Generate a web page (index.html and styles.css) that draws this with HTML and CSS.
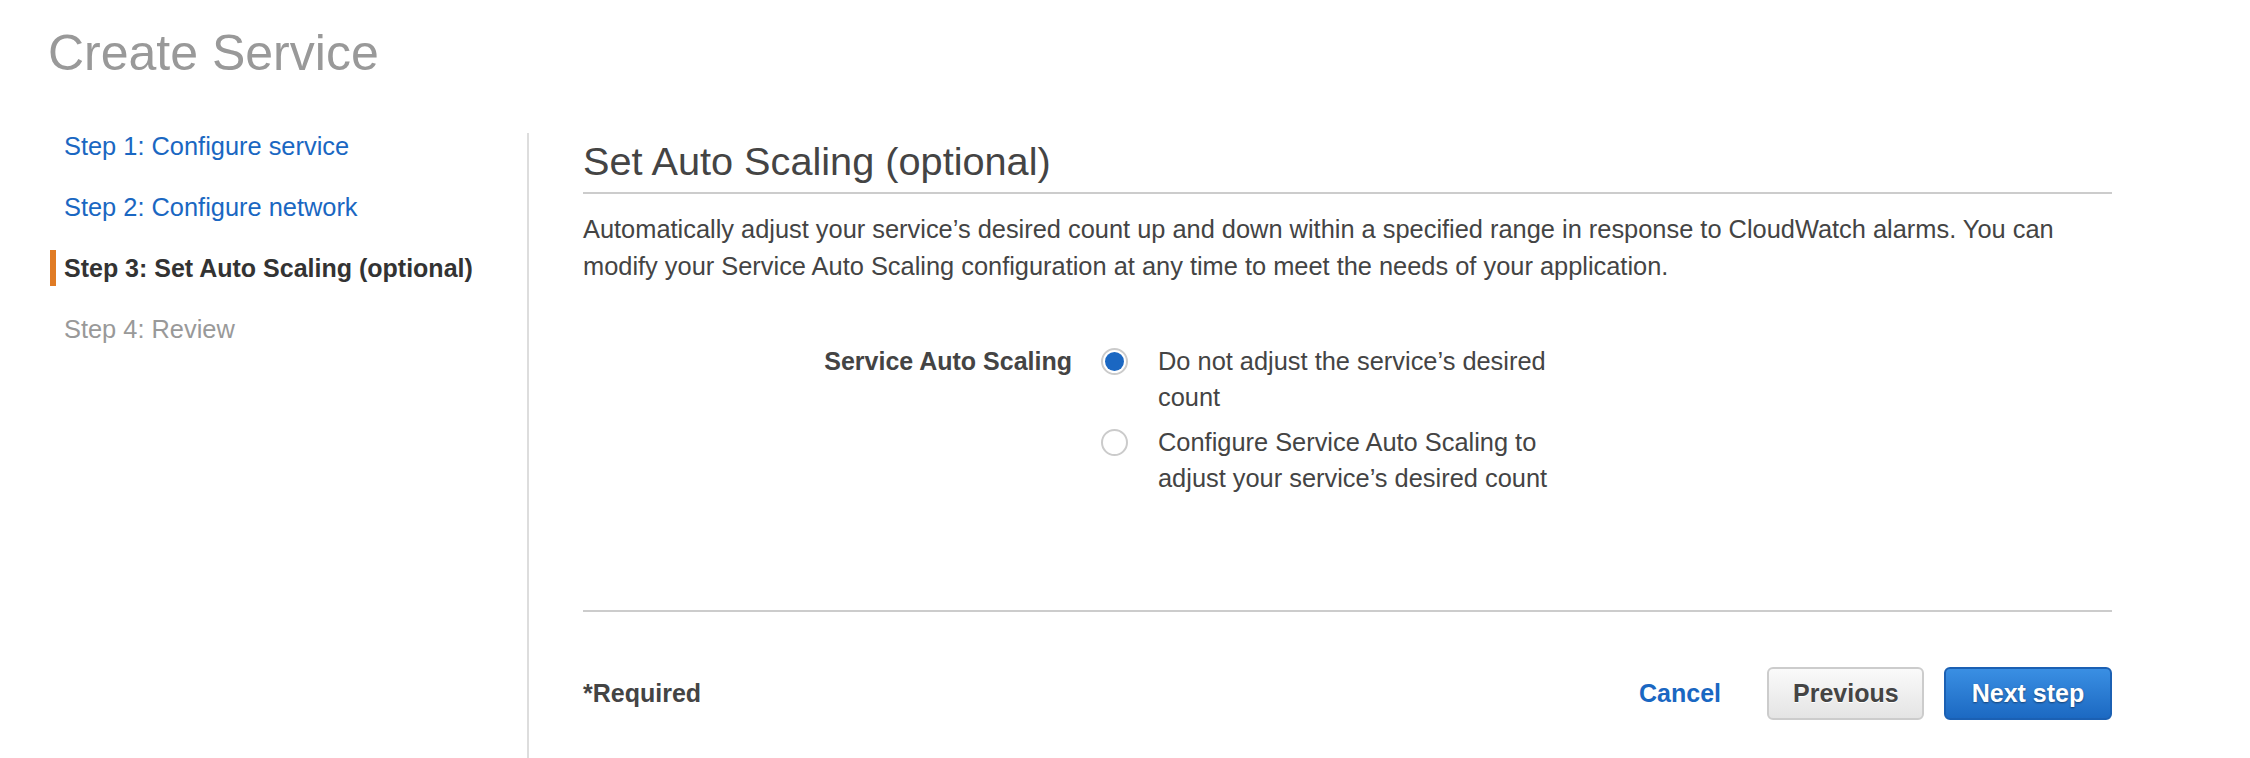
FILE: index.html
```html
<!DOCTYPE html>
<html lang="en">
<head>
<meta charset="utf-8">
<title>Create Service</title>
<link rel="stylesheet" href="styles.css">
</head>
<body>
<header class="page-header">
  <h1 class="page-title">Create Service</h1>
</header>
<div class="wizard">
  <nav class="steps">
    <a class="step step-link" href="#">Step 1: Configure service</a>
    <a class="step step-link" href="#">Step 2: Configure network</a>
    <div class="step step-current">Step 3: Set Auto Scaling (optional)</div>
    <div class="step step-disabled">Step 4: Review</div>
  </nav>
  <main class="content">
    <h2 class="section-title">Set Auto Scaling (optional)</h2>
    <p class="intro">Automatically adjust your service’s desired count up and down within a specified range in response to CloudWatch alarms. You can modify your Service Auto Scaling configuration at any time to meet the needs of your application.</p>
    <div class="form-row">
      <div class="form-label">Service Auto Scaling</div>
      <div class="options">
        <label class="option">
          <span class="radio radio-checked"><span class="radio-dot"></span></span>
          <span class="option-text">Do not adjust the service’s desired count</span>
        </label>
        <label class="option">
          <span class="radio"></span>
          <span class="option-text">Configure Service Auto Scaling to adjust your service’s desired count</span>
        </label>
      </div>
    </div>
    <div class="footer">
      <div class="required">*Required</div>
      <div class="actions">
        <a class="cancel" href="#">Cancel</a>
        <button class="btn btn-secondary" type="button">Previous</button>
        <button class="btn btn-primary" type="button">Next step</button>
      </div>
    </div>
  </main>
</div>
</body>
</html>
```
FILE: styles.css
```css
html, body {
  margin: 0;
  padding: 0;
  background: #ffffff;
}

body {
  font-family: "Liberation Sans", Arial, Helvetica, sans-serif;
  font-size: 25.4px;
  color: #444444;
  overflow: hidden;
}

.page-header {
  padding: 24px 0 0 48px;
}

.page-title {
  margin: 0;
  font-size: 50px;
  line-height: 58px;
  font-weight: normal;
  color: #999999;
}

.wizard {
  display: flex;
  align-items: flex-start;
  margin-top: 45.5px;
}

.steps {
  width: 527px;
  flex: none;
  display: flex;
  flex-direction: column;
  gap: 25.3px;
  box-sizing: border-box;
  padding-left: 50px;
}

.step {
  display: block;
  line-height: 36px;
  padding-left: 8px;
  border-left: 6px solid transparent;
  text-decoration: none;
  white-space: nowrap;
}

.step-link {
  color: #1a67c2;
}

.step-current {
  font-size: 25px;
  font-weight: bold;
  color: #333333;
  border-left-color: #e07b24;
}

.step-disabled {
  color: #999999;
}

.content {
  border-left: 2px solid #dddddd;
  padding-left: 54px;
  width: 1529px;
  flex: none;
  margin-top: 5.5px;
  padding-bottom: 45px;
}

.section-title {
  margin: 6px 0 0 0;
  font-size: 39.7px;
  line-height: 45px;
  font-weight: normal;
  color: #444444;
  padding-bottom: 8px;
  border-bottom: 2px solid #cccccc;
}

.intro {
  margin: 16.5px 0 0 0;
  line-height: 37.5px;
  color: #444444;
}

.form-row {
  display: grid;
  grid-template-columns: 489px 1fr;
  column-gap: 29px;
  margin-top: 57.5px;
}

.form-label {
  text-align: right;
  font-size: 25px;
  font-weight: bold;
  line-height: 36px;
  color: #444444;
}

.options {
  display: flex;
  flex-direction: column;
  gap: 8.5px;
}

.option {
  display: flex;
  align-items: flex-start;
  gap: 30px;
  line-height: 36px;
}

.radio {
  flex: none;
  width: 27px;
  height: 27px;
  box-sizing: border-box;
  border: 2px solid #cbcbcb;
  border-radius: 50%;
  background: #ffffff;
  margin-top: 5px;
  display: flex;
  align-items: center;
  justify-content: center;
}

.radio-dot {
  width: 19px;
  height: 19px;
  border-radius: 50%;
  background: #1a67c2;
}

.option-text {
  width: 400px;
  color: #444444;
}

.footer {
  border-top: 2px solid #cccccc;
  margin-top: 114px;
  padding-top: 55px;
  display: flex;
  align-items: center;
  justify-content: space-between;
  font-size: 25px;
}

.required {
  font-weight: bold;
  color: #444444;
}

.actions {
  display: flex;
  align-items: center;
}

.cancel {
  font-weight: bold;
  color: #1a67c2;
  text-decoration: none;
  margin-right: 46px;
}

.btn {
  font-family: "Liberation Sans", Arial, Helvetica, sans-serif;
  font-size: 25px;
  font-weight: bold;
  height: 53px;
  box-sizing: border-box;
  border-radius: 6px;
  padding: 0 24px;
  cursor: pointer;
}

.btn-secondary {
  width: 157px;
  color: #444444;
  background: linear-gradient(#fafafa, #e4e4e4);
  border: 2px solid #cccccc;
  text-shadow: 0 1px 0 #ffffff;
  margin-right: 20px;
}

.btn-primary {
  width: 168px;
  color: #ffffff;
  background: linear-gradient(#3a8fe3, #1c69c2);
  border: 2px solid #1b60b3;
  text-shadow: 0 1px 2px rgba(0, 0, 0, 0.45);
}
```
